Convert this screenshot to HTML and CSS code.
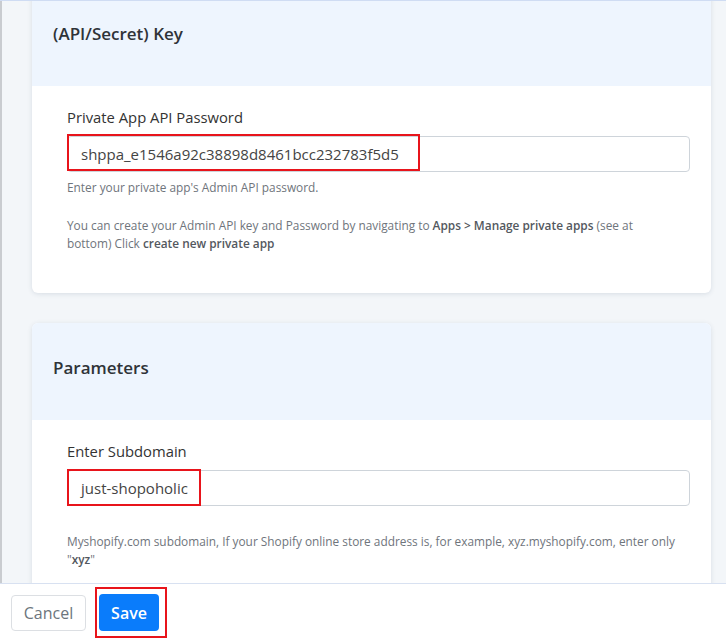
FILE: index.html
```html
<!DOCTYPE html>
<html lang="en">
<head>
<meta charset="utf-8">
<title>Shopify connection</title>
<link rel="stylesheet" href="styles.css">
</head>
<body>
<div class="app">
  <main class="content">
    <div class="stack">
      <section class="card">
        <header class="card-head"><h2 class="card-title">(API/Secret) Key</h2></header>
        <div class="card-body">
          <label class="field-label">Private App API Password</label>
          <div class="input-wrap">
            <div class="input">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</div>
            <span class="mark mark-key"></span>
          </div>
          <p class="help">Enter your private app's Admin API password.</p>
          <p class="help help-gap">You can create your Admin API key and Password by navigating to <b>Apps &gt; Manage private apps</b> (see at bottom) Click <b>create new private app</b></p>
        </div>
      </section>
      <section class="card">
        <header class="card-head"><h2 class="card-title">Parameters</h2></header>
        <div class="card-body">
          <label class="field-label">Enter Subdomain</label>
          <div class="input-wrap">
            <div class="input">just-shopoholic</div>
            <span class="mark mark-sub"></span>
          </div>
          <p class="help help-gap2">Myshopify.com subdomain, If your Shopify online store address is, for example, xyz.myshopify.com, enter only "<b>xyz</b>"</p>
        </div>
      </section>
    </div>
  </main>
  <footer class="footer">
    <button class="btn btn-cancel">Cancel</button>
    <span class="save-mark"><button class="btn btn-save">Save</button></span>
  </footer>
</div>
</body>
</html>
```

FILE: styles.css
```css
* { box-sizing: border-box; }
html, body { margin: 0; padding: 0; }
body {
  font-family: "Open Sans", "Liberation Sans", sans-serif;
  background: #f3f6f9;
  color: #333;
}
.app {
  height: 639px;
  display: flex;
  flex-direction: column;
  border-top: 1px solid #cfdcf3;
}
.content {
  flex: 1;
  overflow: hidden;
  border-left: 2px solid #c9ccd0;
  padding: 0 15px 0 30px;
}
.stack {
  margin-top: -12px;
  display: flex;
  flex-direction: column;
  gap: 30px;
}
.card {
  background: #fff;
  border-radius: 6px;
  box-shadow: 0 1px 5px rgba(40, 60, 90, 0.13);
  overflow: hidden;
}
.card-head {
  background: #eef5fe;
  padding: 33px 21px 40px;
}
.card-title {
  margin: 0;
  font-size: 17px;
  line-height: 24px;
  font-weight: 600;
  color: #2f3338;
}
.card-body {
  padding: 20px 21px 41px 35px;
}
.field-label {
  display: block;
  font-size: 14.8px;
  line-height: 22px;
  color: #333;
  margin-bottom: 8px;
}
.input-wrap { position: relative; }
.input {
  height: 36px;
  border: 1px solid #ced4da;
  border-radius: 4px;
  padding: 0 13px;
  font-size: 15px;
  line-height: 34px;
  color: #444;
}
.mark {
  position: absolute;
  top: -2px;
  left: 0;
  height: 37px;
  border: 2px solid #e8141b;
  pointer-events: none;
}
.mark-key { width: 353px; }
.mark-sub { width: 134px; top: -1px; height: 37px; }
.help {
  margin: 6px 0 0;
  max-width: 611px;
  font-size: 11.85px;
  line-height: 18px;
  color: #6f757c;
}
.help b { font-weight: 600; color: #53585e; }
.help-gap { margin-top: 20px; }
.help-gap2 { margin-top: 26px; }
.footer {
  flex: none;
  height: 56px;
  background: #fff;
  border-top: 1px solid #d8e1f1;
  display: flex;
  align-items: flex-start;
  padding: 11px 0 0 11px;
}
.btn {
  font-family: "Open Sans", "Liberation Sans", sans-serif;
  font-size: 16px;
  height: 36px;
  border-radius: 4px;
  cursor: pointer;
}
.btn-cancel {
  width: 75px;
  background: #fff;
  border: 1px solid #dcdfe3;
  color: #6c757d;
  padding: 0;
}
.save-mark {
  margin-left: 9px;
  margin-top: -8px;
  border: 2px solid #e8141b;
  padding: 5px 6px 5px 2px;
  display: flex;
}
.btn-save {
  width: 60px;
  height: 37px;
  background: #0a7cfb;
  border: none;
  color: #fff;
  font-weight: 600;
  padding: 0;
}
```
